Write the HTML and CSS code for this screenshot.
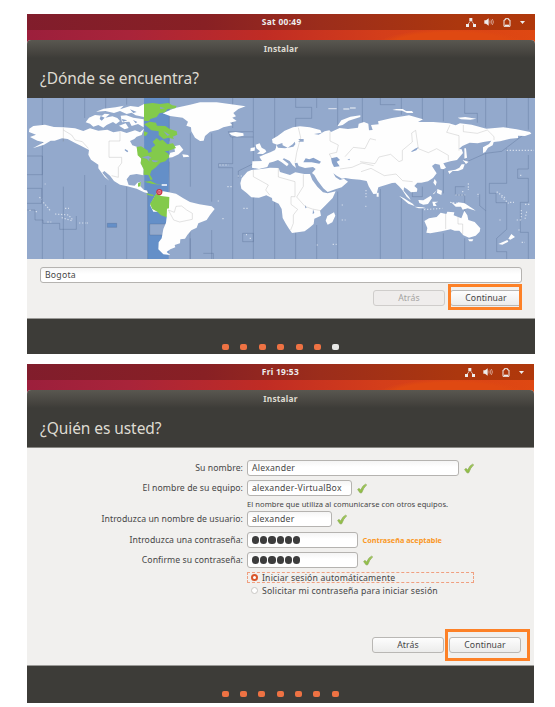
FILE: index.html
```html
<!DOCTYPE html>
<html lang="es">
<head>
<meta charset="utf-8">
<title>Instalar</title>
<link rel="stylesheet" href="styles.css">
</head>
<body>
<svg width="0" height="0" class="defs">
  <defs>
    <linearGradient id="leaf" x1="0" y1="0" x2="0" y2="1"><stop offset="0" stop-color="#a9d162"/><stop offset="1" stop-color="#8dbd3e"/></linearGradient>
    <symbol id="check" viewBox="0 0 30 30"><path d="M2 18 Q5 14 8 16 L11 20 Q17 5 26 2 L29 4 Q19 13 14 28 L9 28 Z" fill="url(#leaf)" stroke="#86a552" stroke-width="2"/></symbol>
    <symbol id="net" viewBox="0 0 30 27"><path d="M10 0h9v9h-9zM0 18h9v9H0zM21 18h9v9h-9z" fill="#eee"/><path d="M14 8 6 19M16 8 24 19" stroke="#e5d5cf" stroke-width="2.5"/></symbol>
    <symbol id="sound" viewBox="0 0 30 24"><path d="M1 7h5l8-6v22l-8-6H1z" fill="#eee"/><path d="M17 8q3 4 0 8M21 5q5 7 0 14M25 3q7 9 0 18" stroke="#dcb0a2" stroke-width="2.4" fill="none"/></symbol>
    <symbol id="battery" viewBox="0 0 24 27"><path d="M3 6h4V2h10v4h4v19H3z" fill="none" stroke="#eee" stroke-width="3"/><path d="M6 20h12v4H6z" fill="#eee"/></symbol>
    <symbol id="caret" viewBox="0 0 16 9"><path d="M0 0h16L8 9z" fill="#eee"/></symbol>
  </defs>
</svg>

<section class="screen first">
  <div class="panel"><span class="clock">Sat 00:49</span>
    <div class="tray"><svg class="i-net"><use href="#net"/></svg><svg class="i-snd"><use href="#sound"/></svg><svg class="i-bat"><use href="#battery"/></svg><svg class="i-car"><use href="#caret"/></svg></div>
  </div>
  <div class="window">
    <header><div class="title">Instalar</div><h1>¿Dónde se encuentra?</h1></header>
    <svg class="map" viewBox="81 9 1524 483" preserveAspectRatio="none">
      <path fill="#93a9cc" d="M0 0h1700v500H0z"/>
      <path fill="#648fc8" d="M432 9h76v150l-2 130v203h-63V285h-10z"/>
      <g class="zones">
        <path d="M127 9v483M190 9v130M190 275v217M254 9v60M254 240v252M317 9v40M317 270v222M380 9v20M380 275v217M443 285v207M508 9v130M508 200v90M571 115v160M571 430v62"/>
        <path d="M81 183h46v56H81M81 280h44v45H81M81 345h24v30h24v10h50v18h50v-40"/>
        <path fill="#648fc8" d="M322 385h28v12h-28z"/><path fill="#93a9cc" d="M449 387h56v33h-56z"/>
        <g transform="translate(570)"><path d="M0 405v87M65 405v87M65 115v205M128 9v90M115 110h75v16h-68zM128 126v80h-42v12h42v274M190 9v100M190 126v80l-45 22v20M190 305v187M254 9v120M254 320v172M317 9v28h48v33h-48v28M317 412v80M380 9v30M380 390v102M443 9v85M443 290v202M517 9v80M158 415h32v25h-32zM40 475h30v17"/></g>
        <g transform="translate(1080)"><path d="M61 9v20h45M61 282v210M124 9v50M124 310v182M187 9v65M187 275v30h-30v-25M187 340v152M250 9v70M250 220v75M250 415v77M314 9v46h38v28M314 168v35l63-28 48-6 66-50M314 275h-28v25h28v50M314 430v62M377 9v88M377 175v172l-18-15v-34M377 347v145M440 9v88M440 160v105h-52v30h20v28h32v80l-30 27v40h30v22M505 9v95M505 180v42h-32v28h32v72h-24v90h24v80"/></g>
      </g>
      <g fill="#fefefe">
        <g transform="translate(60)">
          <path d="M28 101 40 93 75 89 102 96 130 97 165 100 190 108 210 100 235 107 262 104 280 112 302 108 320 114 345 106 360 112 372 101 365 120 350 125 343 132 330 138 337 151 350 155 356 178 364 186 362 205 371 222 370 241 350 237 330 240 320 253 326 270 344 272 352 263 363 260 361 274 371 284 381 287 384 295 372 292 350 281 322 274 300 269 282 258 270 242 253 228 247 233 268 257 254 246 235 220 235 209 213 194 205 179 207 165 184 153 164 143 143 132 126 130 104 137 92 137 72 149 38 160 72 142 52 137 30 126 48 119 27 111z"/>
          <path d="M197 82 207 68 225 60 246 62 254 56 269 58 256 68 277 64 292 69 300 78 288 87 279 81 260 90 250 98 235 90 220 95 210 86zM228 50 251 41 287 37 311 32 300 43 331 33 355 36 372 27 372 66 347 61 335 53 320 57 300 48 282 54 256 48zM302 62 319 61 340 68 371 73 371 97 354 87 335 93 328 80 306 82zM297 92 317 85 326 99 314 103z"/>
          <path d="M428 55 465 39 510 29 540 22 590 22 650 30 677 34 655 42 640 54 648 64 637 68 650 78 630 83 637 91 610 97 595 104 570 110 555 123 551 137 540 138 525 128 514 109 513 97 499 92 504 80 488 68 450 63z"/>
          <path d="M412 292 430 289 446 292 468 296 490 310 510 321 538 328 575 334 584 342 570 360 560 375 535 385 530 398 514 406 502 420 495 431 481 433 480 445 464 450 466 457 451 463 440 471 451 480 430 478 415 463 416 442 425 430 430 402 438 383 440 366 422 350 400 350 390 330 403 306z"/>
          <path d="M462 154 479 150 490 164 476 178 457 187 445 188 451 173 465 170zM487 178 504 180 508 185 490 187zM425 268h16v4h-16z"/>
        </g>
        <g transform="translate(570)">
          <path d="M155 250 172 230 184 225 214 222 240 218 266 219 270 231 300 240 316 232 343 237 360 237 367 255 382 275 399 292 413 295 437 289 428 309 408 329 390 347 393 362 373 371 371 387 360 397 344 409 306 414 296 400 288 387 278 369 275 342 266 326 247 317 246 309 229 301 207 308 184 307 170 294 154 281 151 265z"/>
          <path d="M432 352 436 362 427 382 413 389 407 377 412 363zM117 114 137 111 160 115 161 122 141 125 125 121zM197 149 209 145 215 158 226 164 229 170 219 177 201 176 210 169 199 160zM182 159 195 157 194 167 181 169zM442 94 454 76 481 65 511 61 511 66 476 77 458 90z"/>
          <path d="M186 218 187 199 216 198 208 185 225 178 241 172 255 165 258 158 259 149 264 158 285 160 310 155 316 148 314 138 321 128 330 137 323 140 341 140 341 132 322 131 308 148 293 158 278 151 277 144 261 149 248 144 246 133 263 123 284 107 309 97 330 94 359 97 391 105 395 113 372 117 386 119 404 109 418 106 423 111 449 99 474 102 504 98 506 86 522 81 535 86 537 106 548 105 543 90 566 88 564 79 606 69 657 61 699 73 684 81 730 81 777 85 797 91 810 85 845 89 889 101 940 97 980 103 1020 111 1024 116 1005 123 984 122 984 129 961 131 930 139 911 141 908 151 894 158 886 171 879 174 879 157 897 147 904 137 880 141 863 145 839 143 817 153 807 162 815 163 819 174 808 187 801 195 781 199 760 205 768 218 760 223 752 221 749 209 735 206 726 213 733 224 740 235 729 249 714 259 694 263 682 263 673 273 682 281 681 290 663 292 651 282 642 277 641 287 657 306 662 316 650 305 637 285 627 274 616 263 606 264 587 270 565 277 560 296 550 297 536 274 530 258 510 254 484 252 466 249 456 251 440 242 430 235 437 247 450 255 462 251 474 260 455 277 436 283 413 291 400 280 383 257 373 240 366 234 377 222 369 216 345 219 326 213 322 203 314 205 318 219 308 211 299 198 282 190 278 193 296 207 291 214 275 202 264 195 250 200 238 203 232 216 219 219 207 222z"/>
          <path d="M415 39h25v4h-25zM460 40h18v4h-18zM480 37h17v4h-17z" opacity=".6"/>
        </g>
        <g transform="translate(1080)">
          <path d="M193 378 207 370 230 366 242 353 259 357 262 350 283 352 281 361 304 370 313 347 322 361 325 375 344 381 361 400 359 410 347 422 327 428 310 421 298 407 284 407 272 403 245 409 211 415 199 413 202 399z"/>
          <path d="M324 433h16l-3 6h-9zM454 417 465 426 451 434 445 431zM442 435 445 440 427 449 415 447zM117 302 132 310 158 326 164 333 145 326zM163 335 188 337 199 340 176 340zM175 315 190 316 212 302 216 309 204 327 190 329 178 324zM272 320 286 327 295 322 314 325 340 342 347 347 323 340 308 344 303 335 287 335zM217 320 235 320 225 325 230 333 220 333zM224 252 230 261 227 272 220 263zM232 282 246 287 244 300 231 294zM218 298 231 285 222 297zM264 228 286 224 298 218 305 208 314 208 309 222 294 228 278 228 268 237zM308 195 326 200 318 207zM313 160h5l3 28-8 3zM109 42h19l10 6h18l4 6h-19l-14-7-30-2zM293 68 316 66 349 71 331 74 303 73z"/>
          <path d="M50 293h6v12h-6z"/>
        </g>
      </g>
      <g transform="translate(60)" fill="#83ca4b">
        <path d="M372 27 398 24 420 27 445 24 457 31 470 33 466 40 443 42 435 52 418 55 410 66 391 72 387 79 372 77zM372 88 390 80 408 83 411 92 436 93 449 102 470 109 472 119 458 125 462 132 444 128 431 132 416 120 416 109 394 106 383 96zM372 109 384 113 378 122 372 122z"/>
        <path d="M350 156 363 154 384 167 385 174 395 170 394 160 406 151 398 140 410 129 420 137 428 134 442 148 459 145 468 159 446 167 434 169 445 176 448 186 436 199 421 203 406 218 394 227 390 239 398 253 392 256 385 240 371 239 371 223 362 205 364 191 353 181z"/>
        <path d="M372 260 392 258 408 266 427 270 398 267zM411 295 423 303 448 306 447 340 441 341 440 367 423 361 412 350 397 342 390 327 399 312 405 301zM354 265l9-5-2 14-7 1zM380 295l22 5-4 4-17-5z"/>
      </g>
      <g fill="#8aa3cb">
        <g transform="translate(60)"><path d="M365 187l20-5 10 7-8 2 2 9-8-8zM395 195l22 2-10 5-9-2zM315 162l10 6-3 4-8-6zM420 35l15 5-14 2zM430 108l20 12-8 2z"/><path d="M305 72l17 4-13 4zM330 43l20 8-10 3zM242 63l12 5-9 9-6-5zM339 75l13 6-5 4z"/></g>
        <g transform="translate(570)"><path d="M340 202 347 190 358 193 370 188 393 200 388 206 365 202zM423 190 441 186 450 195 440 200 449 214 432 216 426 204zM369 343l4 11-5 3zM345 330l5 8-4 2zM472 194l8-3-2 5z"/></g>
        <path d="M1234 169l11-8 11-5-7 10-14 5z"/>
      </g>
      <g class="borders">
        <path d="M190 98v42M190 105l25 15 10 15 22 5 18 20M360 109v29h-33v49h38v17l-10 13v30l-20-5M505 345l18 7 5-18 17-1 15 12 17 10v18l-38 8-18-6z"/>
        <g transform="translate(570)"><path d="M190 225v20l45 25-8 15 12 15M265 218v28l50 14v45h-12v23l20 15-13 17v25l-8 20M340 238v36l-20 32 25 28 22 8 25 5M325 98l7 30-12 45-5 30M420 110v28l25 12-5 22-22 5 8 15M465 185l25-28 35 4 15-30 18 4M450 222l36-5 30-13 35 8"/></g>
        <g transform="translate(1080)"><path d="M0 200l45 6 12-20 35-8 25 22 10-4v-30l30-25-2-27 12-8 8 55 30 12 25-12 35 20v15M270 90l-10 22 37 10v45M310 90v20l42 5 30-10 20 20v10M3 230l30-10 40 22 35-5 20 20 30 3M257 356v46M294 365v22h14v30"/></g>
      </g>
      <g class="islands">
        <path d="M134 267h3M118 307l8 6M130 322l20 24M88 346h4M107 350h8M195 340h12M165 357l40 3 12 13M185 368l33 10M142 381h12M237 384h20M260 384h6"/>
        <path d="M653 318h4M667 371h4M658 210h28M713 243h20M682 275h14M730 340h18M738 419h3M749 430h5M1025 330h4M1025 375h12M950 450h6M998 448h12M1098 285v25M1096 334h3"/>
        <path d="M1366 300h30M1386 290h4M1405 265v20M1434 296v10M1350 322l25 3M1272 344l55-4M1490 290l25 18M1504 305l22 20M1530 322h12M1575 328h18M1564 345v28M1580 350l-5 22M1550 375h15M1520 166h82M1560 241h8M1565 442h10M1555 405h5M1498 375h8"/>
      </g>
      <circle cx="478" cy="291" r="7.5" fill="#ee8795" stroke="#c63144" stroke-width="3.5"/><path d="M474 291h8" stroke="#b43c4a" stroke-width="3"/>
    </svg>
    <div class="place">
      <div class="input">Bogota</div>
      <div class="buttons"><span class="btn disabled">Atrás</span><span class="btn cont">Continuar<i class="mark"></i></span></div>
    </div>
    <footer><b></b><b></b><b></b><b></b><b></b><b></b><b class="off"></b></footer>
  </div>
</section>

<section class="screen second">
  <div class="panel"><span class="clock">Fri 19:53</span>
    <div class="tray"><svg class="i-net"><use href="#net"/></svg><svg class="i-snd"><use href="#sound"/></svg><svg class="i-bat"><use href="#battery"/></svg><svg class="i-car"><use href="#caret"/></svg></div>
  </div>
  <div class="window">
    <header><div class="title">Instalar</div><h1>¿Quién es usted?</h1></header>
    <div class="user">
      <div class="row r1"><label>Su nombre:</label><div class="input name">Alexander</div><svg class="ok"><use href="#check"/></svg></div>
      <div class="row r2"><label>El nombre de su equipo:</label><div class="input host">alexander-VirtualBox</div><svg class="ok"><use href="#check"/></svg></div>
      <div class="hint">El nombre que utiliza al comunicarse con otros equipos.</div>
      <div class="row r3"><label>Introduzca un nombre de usuario:</label><div class="input login">alexander</div><svg class="ok"><use href="#check"/></svg></div>
      <div class="row r4"><label>Introduzca una contraseña:</label><div class="input pass"><i></i><i></i><i></i><i></i><i></i><i></i></div><span class="strength">Contraseña aceptable</span></div>
      <div class="row r5"><label>Confirme su contraseña:</label><div class="input pass"><i></i><i></i><i></i><i></i><i></i><i></i></div><svg class="ok"><use href="#check"/></svg></div>
      <div class="radio focus"><i class="on"></i><span class="t1">Iniciar sesión automáticamente</span></div>
      <div class="radio"><i></i><span class="t2">Solicitar mi contraseña para iniciar sesión</span></div>
      <div class="buttons"><span class="btn">Atrás</span><span class="btn cont">Continuar<i class="mark"></i></span></div>
    </div>
    <footer><b></b><b></b><b></b><b></b><b></b><b></b><b></b></footer>
  </div>
</section>
</body>
</html>
```
FILE: styles.css
```css
* { box-sizing: border-box; }
body { margin: 0; padding: 14px 0 0 27px; background: #fff; font: 8.7px/12px "Noto Sans", "Open Sans", sans-serif; color: #464646; }
.defs { display: block; position: absolute; }
svg { display: block; flex: none; }
.screen { width: 508px; height: 340px; background: radial-gradient(ellipse 75px 16px at 425px 31px, #df4912 80%, transparent), linear-gradient(90deg, #9c1f3c 0, #a9243a 20%, #c02c24 47%, #d43e1a 70%, #df4812 100%); }
.second { width: 507px; height: 339px; margin-top: 10px; }
.panel { height: 16px; display: flex; align-items: center; justify-content: flex-end; position: relative; background: linear-gradient(90deg, #811d2c 0, #882024 35%, #9c2d1b 58%, #ac370e 85%, #b0380b 100%); }
.clock { width: 274.5px; margin-right: auto; text-align: right; color: #eee; font-weight: 700; font-size: 8.4px; letter-spacing: .3px; }
.second .clock { width: 272px; }
.tray { display: flex; align-items: center; padding-right: 10px; }
.i-net { width: 10px; height: 9px; margin-right: 8px; }
.i-snd { width: 10px; height: 8px; margin-right: 9px; }
.i-bat { width: 8px; height: 9px; margin-right: 9px; }
.i-car { width: 5px; height: 3px; }
.window { margin-top: 10px; border-radius: 4px 4px 0 0; background: #f1f0ee; overflow: hidden; }
header { height: 58px; background: linear-gradient(#595750 0, #46443f 13px, #3d3c38 18px); color: #dfdbd2; }
.second header { border-bottom: 1px solid #888783; }
.title { height: 18px; line-height: 18px; text-align: center; font-weight: 700; font-size: 8.4px; letter-spacing: .2px; }
h1 { margin: 0; padding: 9px 0 0 13px; font-size: 15.5px; line-height: 22px; font-weight: 400; letter-spacing: -.07px; }
.map { width: 508px; height: 161px; }
.zones { fill: none; stroke: #4e648b; stroke-opacity: .55; stroke-width: 1.7; }
.borders { fill: none; stroke: #aaa; stroke-opacity: .65; stroke-width: 1.5; }
.islands { fill: none; stroke: #eef2f8; stroke-width: 3.5; stroke-dasharray: 4 5; opacity: .7; }
.input { height: 16px; border: 1px solid #b5b3b0; border-radius: 3px; padding-left: 4px; line-height: 14px; background: linear-gradient(#f5f5f5, #fff 6px); white-space: nowrap; letter-spacing: .22px; }
.place { height: 60px; padding: 8px 13px 0; border-bottom: 1px solid #9b9a97; }
.buttons { display: flex; justify-content: flex-end; }
.place .buttons { padding-top: 7px; gap: 5px; }
.btn { position: relative; width: 72px; height: 16px; border: 1px solid #b9b7b4; border-radius: 3px; text-align: center; line-height: 15px; background: linear-gradient(#fdfdfd, #ececeb); letter-spacing: .08px; }
.disabled { color: #a5a4a2; background: #efedec; border-color: #cfcdcb; }
.mark { position: absolute; border: 3px solid #fd8127; }
.first .mark { left: -3px; top: -7px; width: 74px; height: 26px; }
.second .mark { left: -5px; top: -9px; width: 85px; height: 32px; }
footer { height: 35px; background: #3d3c38; display: flex; padding: 25px 0 0 195px; gap: 11.4px; }
.second footer { height: 38px; padding-left: 194.5px; border-top: 1px solid #9b9a97; }
footer b { width: 7px; height: 6px; border-radius: 2px; background: #ee7243; }
footer b.off { background: #e8e8e6; }
.user { height: 217px; padding-top: 12px; }
.row { display: flex; align-items: center; height: 16px; margin-bottom: 4px; }
.row label { width: 216px; text-align: right; margin-right: 4px; white-space: nowrap; flex: none; letter-spacing: .06px; }
.name { width: 212px; } .host { width: 105px; } .login { width: 85px; } .pass { width: 111px; }
.ok { width: 10px; height: 11px; margin-left: 5px; }
.hint { height: 11px; line-height: 9px; margin: 0 0 0 220px; font-size: 7.6px; letter-spacing: .04px; white-space: nowrap; }
.r3 { margin-bottom: 5px; }
.pass { display: flex; align-items: center; gap: 1px; }
.pass i { width: 7.2px; height: 7.2px; border-radius: 50%; background: #3c3c3c; }
.strength { color: #fa9826; font-weight: 700; font-size: 7.3px; margin-left: 4.5px; }
.radio { margin-left: 220px; width: 227px; height: 11px; display: flex; align-items: center; padding-left: 3px; gap: 4px; border: 1px solid transparent; white-space: nowrap; margin-bottom: 2px; letter-spacing: .16px; }
.focus { border: 1px dashed #f0a080; }
.radio i { width: 7px; height: 7px; border-radius: 50%; border: 1px solid #c9c7c4; background: #fff; }
.radio i.on { border: 2.5px solid #d9572c; }
.user .buttons { padding: 39px 13px 0 0; gap: 5px; }
```
